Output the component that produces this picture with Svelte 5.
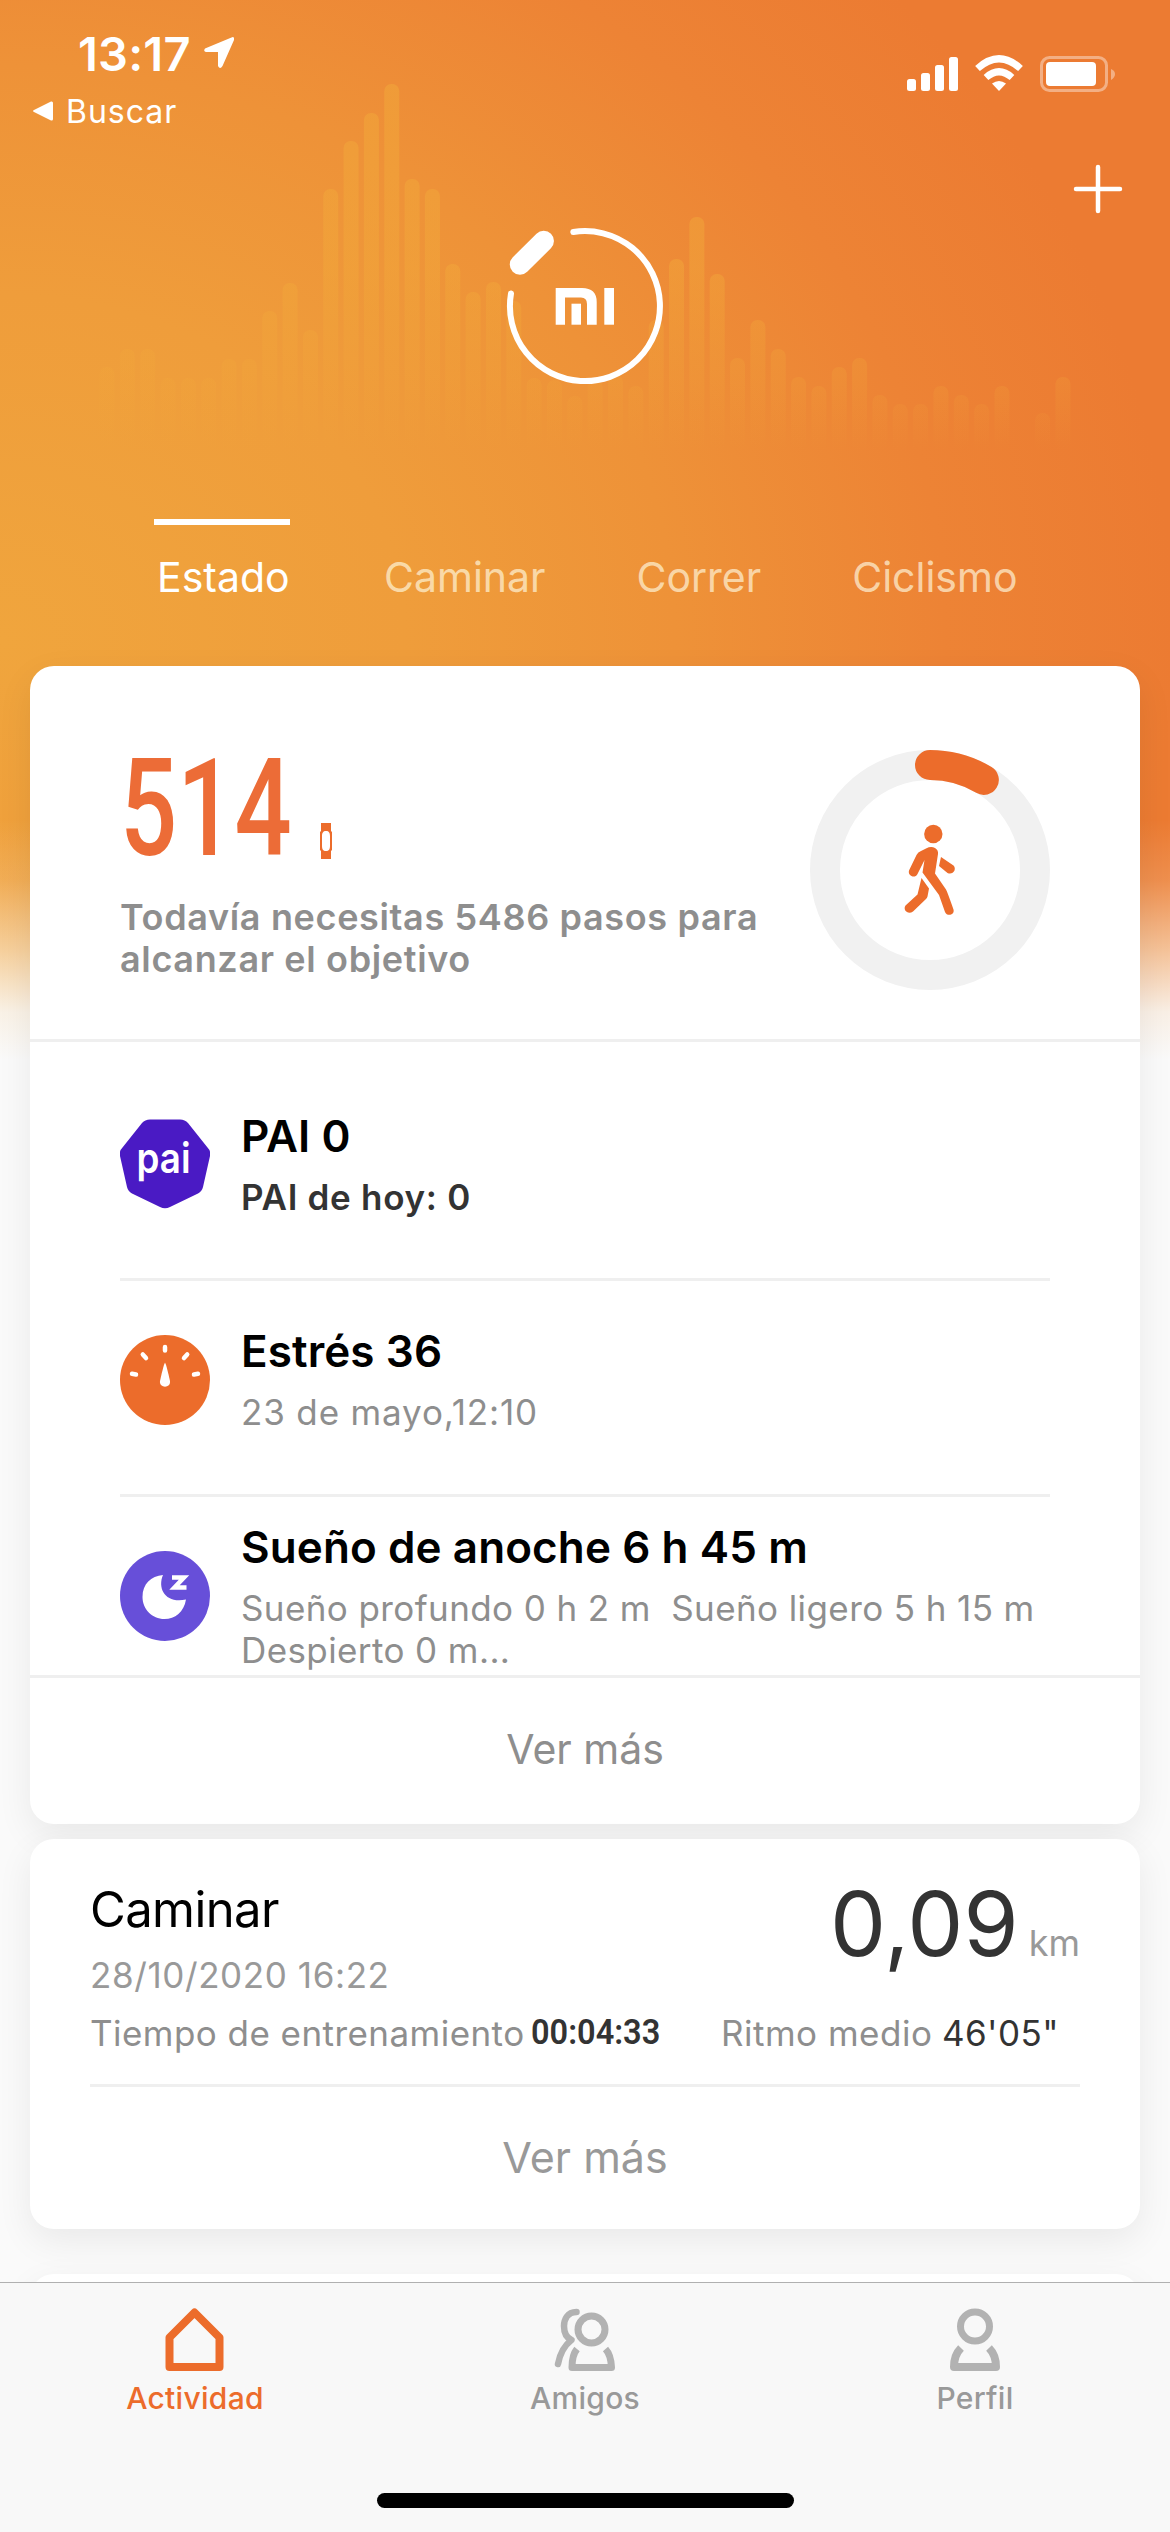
<script lang="ts">
	const barPitch = 20.34;
	// distance of each bar's top from the top of the screen, 0 = no bar
	const barTops = [
		367, 349, 349, 378, 378, 378, 359, 359, 311, 283, 330, 189, 141, 113, 84, 179, 189, 264, 292, 282, 301, 378,
		380, 396, 380, 375, 386, 320, 259, 217, 274, 358, 320, 349, 377, 386, 367, 358, 395, 404, 404, 386, 395, 404,
		386, 0, 413, 377
	];

	const tabs = ['Estado', 'Caminar', 'Correr', 'Ciclismo'];
	let activeTab = $state('Estado');

	const steps = 514;
	const goal = 6000;
	const circumference = 2 * Math.PI * 105;
	const progress = (steps / goal) * circumference;

	const nav = ['Actividad', 'Amigos', 'Perfil'];
	let activeNav = $state('Actividad');
</script>

<div class="screen">
	<svg class="bars" viewBox="0 0 1170 480">
		<defs>
			<linearGradient id="barFade" x1="0" y1="84" x2="0" y2="450" gradientUnits="userSpaceOnUse">
				<stop offset="0" stop-color="#f2a93a" stop-opacity="0.5" />
				<stop offset="0.5" stop-color="#f2a93a" stop-opacity="0.45" />
				<stop offset="0.8" stop-color="#f2a93a" stop-opacity="0.22" />
				<stop offset="1" stop-color="#f2a93a" stop-opacity="0" />
			</linearGradient>
		</defs>
		{#each barTops as top, i}
			{#if top}
				<rect x={99.5 + i * barPitch} y={top} width="15" height={460 - top} rx="7" fill="url(#barFade)" />
			{/if}
		{/each}
	</svg>

	<header class="status">
		<div class="status-left">
			<div class="clock">
				<span class="time">13:17</span>
				<svg width="32" height="35" viewBox="0 0 32 35">
					<path d="M28.5 1.5 2 12.5Q0 15 3 16H15V30Q17 34 19.5 30L31 4Q31.500 0 28.500 1.500Z" fill="#fff" />
				</svg>
			</div>
			<div class="back">
				<svg width="22" height="22" viewBox="0 0 22 22">
					<path d="M19 1.500 2 10Q0 11 2 12L19 20.500Q21 21 21 19V3Q21 1 19 1.500Z" fill="#fff" />
				</svg>
				<span>Buscar</span>
			</div>
		</div>
		<svg class="signals" width="210" height="38" viewBox="0 0 210 38">
			<g fill="#fff">
				<rect x="0" y="24" width="9" height="12" rx="2.500" />
				<rect x="14" y="18" width="9" height="18" rx="2.500" />
				<rect x="28" y="10" width="9" height="26" rx="2.500" />
				<rect x="42" y="2" width="9" height="34" rx="2.500" />
				<path d="M92 36 85 28.500Q92 23.500 99 28.500Z" />
				<rect x="139" y="7" width="50" height="24" rx="4" />
			</g>
			<g fill="none" stroke="#fff" stroke-width="7">
				<path d="M70.500 13.500Q92-6 113.500 13.500" />
				<path d="M79 22.500Q92 11 105 22.500" />
			</g>
			<rect x="134.500" y="2.500" width="65" height="33" rx="8" fill="none" stroke="#fff" stroke-opacity="0.4" stroke-width="3" />
			<path d="M204 14Q208 15.500 208 19T204 25Z" fill="#fff" fill-opacity="0.4" />
		</svg>
	</header>

	<div class="device">
		<svg width="160" height="160" viewBox="0 0 160 160">
			<path d="M68.300 6A75 75 0 1 1 6 67.500" fill="none" stroke="#fff" stroke-width="6" stroke-linecap="round" />
			<path d="M15 38.500 38.700 15" stroke="#fff" stroke-width="20.500" stroke-linecap="round" />
			<g fill="#fff">
				<path d="M50.700 62H77Q91.700 62 91.700 76V98.700H82V78Q82 71.500 76 71.500H60V98.700H50.700Z" />
				<rect x="66.500" y="77.700" width="9.500" height="21" />
				<rect x="99.300" y="62" width="9.700" height="36.700" />
			</g>
		</svg>
		<button class="add" aria-label="Añadir">
			<svg width="50" height="50" viewBox="0 0 50 50">
				<path d="M25 3V47M3 25H47" stroke="#fff" stroke-width="4.500" stroke-linecap="round" />
			</svg>
		</button>
	</div>

	<nav class="tabs">
		{#each tabs as tab}
			<button class:active={activeTab === tab} onclick={() => (activeTab = tab)}>{tab}</button>
		{/each}
	</nav>

	<section class="card summary">
		<div class="steps">
			<div class="steps-text">
				<div class="count">
					<span class="number">{steps}</span>
					<svg width="12" height="36" viewBox="0 0 12 36">
						<path
							d="M1 0H11V8L12 9V27L11 28V36H1V28L0 27V9L1 8ZM6 8C3 8 2 10 2 13V23C2 26 3 28 6 28S10 26 10 23V13C10 10 9 8 6 8Z"
							fill="#ec6c2b"
							fill-rule="evenodd"
						/>
					</svg>
				</div>
				<p>Todavía necesitas 5486 pasos para<br />alcanzar el objetivo</p>
			</div>
			<svg width="240" height="240" viewBox="0 0 240 240">
				<circle cx="120" cy="120" r="105" fill="none" stroke="#f1f1f1" stroke-width="30" />
				<circle
					cx="120"
					cy="120"
					r="105"
					fill="none"
					stroke="#ec6c2b"
					stroke-width="30"
					stroke-linecap="round"
					stroke-dasharray="{progress} {circumference}"
					transform="rotate(-90 120 120)"
				/>
				<g fill="#ec6c2b">
					<circle cx="123.300" cy="84" r="9.200" />
					<path d="M116 98.500Q121 96 125 98Q128.500 100 128 104L125 123.500 136 139.500Q137 141 143.500 159.500C145 165 137 167 135 162L129 145 112.500 122.500 114.500 110 107.500 124C105 129 97.500 126 99 120.500L106.500 105Q108 102 111 101Z" />
					<path d="M131 107 143.500 115.500C147 119 143 125.500 137.500 123L129 116Z" />
					<path d="M111.500 128 119 138.500 117.500 146.500Q117 148 116 149L103 161.500C98 165 92.500 160 95.500 155.500L107.500 144.500Z" />
				</g>
			</svg>
		</div>

		<div class="metric first">
			<svg width="90" height="90" viewBox="0 0 90 90">
				<path
					d="M30 .5H60Q65 .5 68 4L87.500 28.500Q91 32 90 37L83 68Q82 72 78 74.500L50 88Q45 90.500 40 88L12 74.500Q8 72 7 68L0 37Q-1 32 2.500 28.500L22 4Q25 .5 30 .5Z"
					fill="#4a1ac4"
				/>
				<text class="pai" x="16.500" y="54" textLength="54" lengthAdjust="spacingAndGlyphs">pai</text>
			</svg>
			<div class="metric-text">
				<h2>PAI 0</h2>
				<p class="strong">PAI de hoy: 0</p>
			</div>
		</div>

		<div class="metric stress">
			<svg width="90" height="90" viewBox="0 0 90 90">
				<circle cx="45" cy="45" r="45" fill="#ec6c2b" />
				<path
					d="M45 12V15.500M22.800 19.500 26 23M67.200 19.500 64 23M12 38.800 16 39.500M78 38.800 74 39.500"
					stroke="#fff"
					stroke-width="4.500"
					stroke-linecap="round"
				/>
				<path d="M45 27.500Q46.500 30 50 46C51 53.500 39 53.500 40 46Q43.500 30 45 27.500Z" fill="#fff" />
			</svg>
			<div class="metric-text">
				<h2>Estrés 36</h2>
				<p>23 de mayo,12:10</p>
			</div>
		</div>

		<div class="metric sleep">
			<svg width="90" height="90" viewBox="0 0 90 90">
				<circle cx="45" cy="45" r="45" fill="#674fd9" />
				<path d="M43 24C37 38 46 53 66 48.500C64 61 55 68 44.500 68C32 68 22.500 58 22.500 46C22.500 33 31 25 43 24Z" fill="#fff" />
				<path d="M52 26.500H64L54.500 36.500H66.500" fill="none" stroke="#fff" stroke-width="4.500" />
			</svg>
			<div class="metric-text">
				<h2>Sueño de anoche 6 h 45 m</h2>
				<p>Sueño profundo 0 h 2 m&nbsp; Sueño ligero 5 h 15 m<br />Despierto 0 m...</p>
			</div>
		</div>

		<button class="more">Ver más</button>
	</section>

	<section class="card workout">
		<div class="workout-head">
			<div>
				<h2>Caminar</h2>
				<p class="date">28/10/2020 16:22</p>
			</div>
			<p class="distance">0,09<span>km</span></p>
		</div>
		<div class="workout-stats">
			<p class="duration">Tiempo de entrenamiento</p>
			<span class="timer"><b>00:04:33</b></span>
			<p class="pace">Ritmo medio</p>
			<span class="pace-value">46'05"</span>
		</div>
		<button class="more">Ver más</button>
	</section>

	<section class="card next"></section>

	<footer>
		<div class="nav">
			{#each nav as item}
				<button class:active={activeNav === item} onclick={() => (activeNav = item)}>
					<svg width="66" height="66" viewBox="0 0 66 66" fill="none" stroke="currentColor" stroke-width="8">
						{#if item === 'Actividad'}
							<path d="M32.500 6.500 57.500 31.500V61H7.500V31.500Z" stroke-linejoin="round" />
						{:else if item === 'Amigos'}
							<circle cx="39.500" cy="23.500" r="13.500" stroke-width="7" />
							<path d="M25 43Q20 49 20 61.500H59.500Q59 49 53.500 43" stroke-width="7" stroke-linejoin="round" />
							<path d="M24.500 6C15 6 12 14 12 20C12 27 15 32 19.500 34Q9 42 6 58" stroke-width="6.500" stroke-linecap="round" stroke-linejoin="round" />
						{:else}
							<circle cx="33" cy="20.500" r="14.500" stroke-width="7" />
							<path d="M19 42Q12 49 12 61H54Q54 49 47 42" stroke-linejoin="round" />
						{/if}
					</svg>
					<span>{item}</span>
				</button>
			{/each}
		</div>
		<div class="home-bar"></div>
	</footer>
</div>

<style>
	:global(body) {
		margin: 0;
	}

	.screen {
		position: relative;
		display: flex;
		flex-direction: column;
		width: 1170px;
		height: 2532px;
		overflow: hidden;
		font-family: Inter, 'Liberation Sans', sans-serif;
		background:
			linear-gradient(to bottom, rgba(250, 235, 205, 0) 820px, rgba(250, 235, 205, 0.18) 880px, rgba(250, 238, 215, 0.62) 950px, rgba(250, 248, 243, 0.93) 1012px, #fafafa 1060px),
			radial-gradient(1350px 1150px at 0 640px, #f0a53d 0, #ef9d3b 30%, #ee9238 50%, #ed8335 70%, #ec7b32 87%);
	}

	button {
		font: inherit;
		border: 0;
		padding: 0;
		background: none;
	}

	h2,
	p {
		margin: 0;
	}

	svg {
		display: block;
		flex: none;
	}

	.bars {
		position: absolute;
		top: 0;
		left: 0;
		width: 1170px;
		height: 480px;
	}

	.status,
	.device,
	.tabs,
	.card,
	footer {
		position: relative;
	}

	.status {
		display: flex;
		justify-content: space-between;
		height: 150px;
		box-sizing: border-box;
		padding: 31px 53px 0 32px;
		color: #fff;
	}

	.clock {
		display: flex;
		align-items: center;
		gap: 12px;
		height: 44px;
		padding-left: 46px;
	}

	.time {
		font-size: 47px;
		font-weight: 600;
		letter-spacing: 0.2px;
	}

	.back {
		display: flex;
		align-items: center;
		gap: 12px;
		height: 40px;
		margin-top: 16px;
		font-size: 32px;
		letter-spacing: 1px;
	}

	.signals {
		margin-top: 24px;
	}

	.device {
		display: flex;
		justify-content: center;
		height: 369px;
		box-sizing: border-box;
		padding-top: 76px;
	}

	.add {
		position: absolute;
		top: 14px;
		right: 47px;
	}

	.tabs {
		display: flex;
		height: 147px;
		padding-left: 154px;
		gap: 91px;
	}

	.tabs button {
		display: flex;
		height: 100px;
		padding-top: 25px;
		box-sizing: border-box;
		border-top: 6px solid transparent;
		font-size: 41px;
		line-height: 54px;
		color: rgba(255, 250, 225, 0.68);
	}

	.tabs button:first-child {
		width: 136px;
		margin-right: 3px;
		padding-left: 3px;
	}

	.tabs .active {
		border-top-color: #fff;
		color: #fff;
	}

	.card {
		flex: none;
		width: 1110px;
		box-sizing: border-box;
		margin: 0 30px;
		border-radius: 24px;
		background: #fff;
		box-shadow: 0 12px 36px rgba(0, 0, 0, 0.07);
	}

	.summary {
		height: 1158px;
	}

	.steps {
		display: flex;
		justify-content: space-between;
		height: 376px;
		box-sizing: border-box;
		padding: 84px 90px 0;
		border-bottom: 3px solid #efefef;
	}

	.count {
		display: flex;
		align-items: flex-end;
		height: 109px;
	}

	.number {
		width: 200px;
		font-family: Roboto, sans-serif;
		font-size: 136px;
		font-weight: 500;
		line-height: 100px;
		color: #ec6c37;
		transform: scaleX(0.74);
		transform-origin: left;
	}

	.steps p {
		margin-top: 37px;
		font-size: 36px;
		font-weight: 600;
		line-height: 42px;
		letter-spacing: 0.65px;
		white-space: nowrap;
		color: #8e8e8e;
	}

	.metric {
		display: flex;
		gap: 31px;
		height: 216px;
		box-sizing: border-box;
		margin: 0 90px;
		padding-top: 54px;
		border-bottom: 3px solid #efefef;
	}

	.metric.first {
		height: 239px;
		padding-top: 77px;
	}

	.metric.sleep {
		height: 178px;
		border-bottom: 0;
	}

	.metric h2 {
		font-size: 44px;
		font-weight: 600;
		line-height: 60px;
		letter-spacing: 0.1px;
		white-space: nowrap;
	}

	.metric-text {
		margin-top: -14px;
	}

	.metric p {
		margin-top: 10px;
		font-size: 35px;
		line-height: 42px;
		letter-spacing: 0.4px;
		white-space: nowrap;
		color: #8e8e8e;
	}

	.stress p {
		letter-spacing: 0.85px;
	}

	.first .metric-text {
		margin-top: -13px;
	}

	.metric .strong {
		font-weight: 600;
		letter-spacing: 0.7px;
		color: #333;
	}

	.sleep .metric-text {
		margin-top: -34px;
	}

	.pai {
		font-size: 42px;
		font-weight: 600;
		fill: #fff;
	}

	.more {
		display: block;
		width: 100%;
		height: 149px;
		padding-bottom: 5px;
		border-top: 3px solid #efefef;
		font-size: 41px;
		color: #8e8e8e;
	}

	.workout {
		height: 390px;
		margin-top: 15px;
		padding: 36px 60px 0;
	}

	.workout-head {
		display: flex;
		justify-content: space-between;
		height: 130px;
	}

	.workout h2 {
		font-size: 49px;
		font-weight: 400;
		line-height: 70px;
		letter-spacing: -0.6px;
	}

	.date {
		margin-top: 6px;
		font-size: 35px;
		line-height: 48px;
		letter-spacing: 0.6px;
		color: #999;
	}

	.distance {
		margin-top: -1px;
		font-size: 89px;
		line-height: 100px;
		color: #333;
	}

	.distance span {
		margin-left: 10px;
		font-size: 36px;
		color: #999;
	}

	.workout-stats {
		display: flex;
		height: 79px;
		padding-top: 4px;
		box-sizing: border-box;
		font-size: 35px;
		line-height: 48px;
		white-space: nowrap;
		color: #8e8e8e;
	}

	.duration {
		width: 441px;
		letter-spacing: 0.45px;
	}

	.timer {
		width: 190px;
		font-family: Roboto, sans-serif;
		color: #333;
	}

	.timer b {
		display: inline-block;
		font-weight: 600;
		transform: scaleX(0.93);
		transform-origin: left;
	}

	.pace {
		width: 221px;
		letter-spacing: 0.5px;
	}

	.pace-value {
		letter-spacing: 0.4px;
		color: #333;
	}

	.workout .more {
		height: 144px;
		padding-bottom: 1px;
		font-size: 43px;
		color: #999;
	}

	.next {
		height: 60px;
		margin-top: 45px;
	}

	footer {
		position: absolute;
		top: 2282px;
		left: 0;
		width: 1170px;
		height: 250px;
		box-sizing: border-box;
		border-top: 1px solid #b0b0b0;
		background: #f8f8f8;
	}

	.nav {
		display: flex;
		height: 210px;
	}

	.nav button {
		display: flex;
		flex: 1;
		flex-direction: column;
		align-items: center;
		padding-top: 23px;
		color: #b2b2b2;
	}

	.nav span {
		margin-top: 6px;
		font-size: 30px;
		font-weight: 500;
		line-height: 40px;
		letter-spacing: 0.3px;
		color: #999;
	}

	.nav .active,
	.nav .active span {
		color: #ec6c2b;
	}

	.home-bar {
		width: 417px;
		height: 15px;
		margin: 0 auto;
		border-radius: 8px;
		background: #000;
	}
</style>
